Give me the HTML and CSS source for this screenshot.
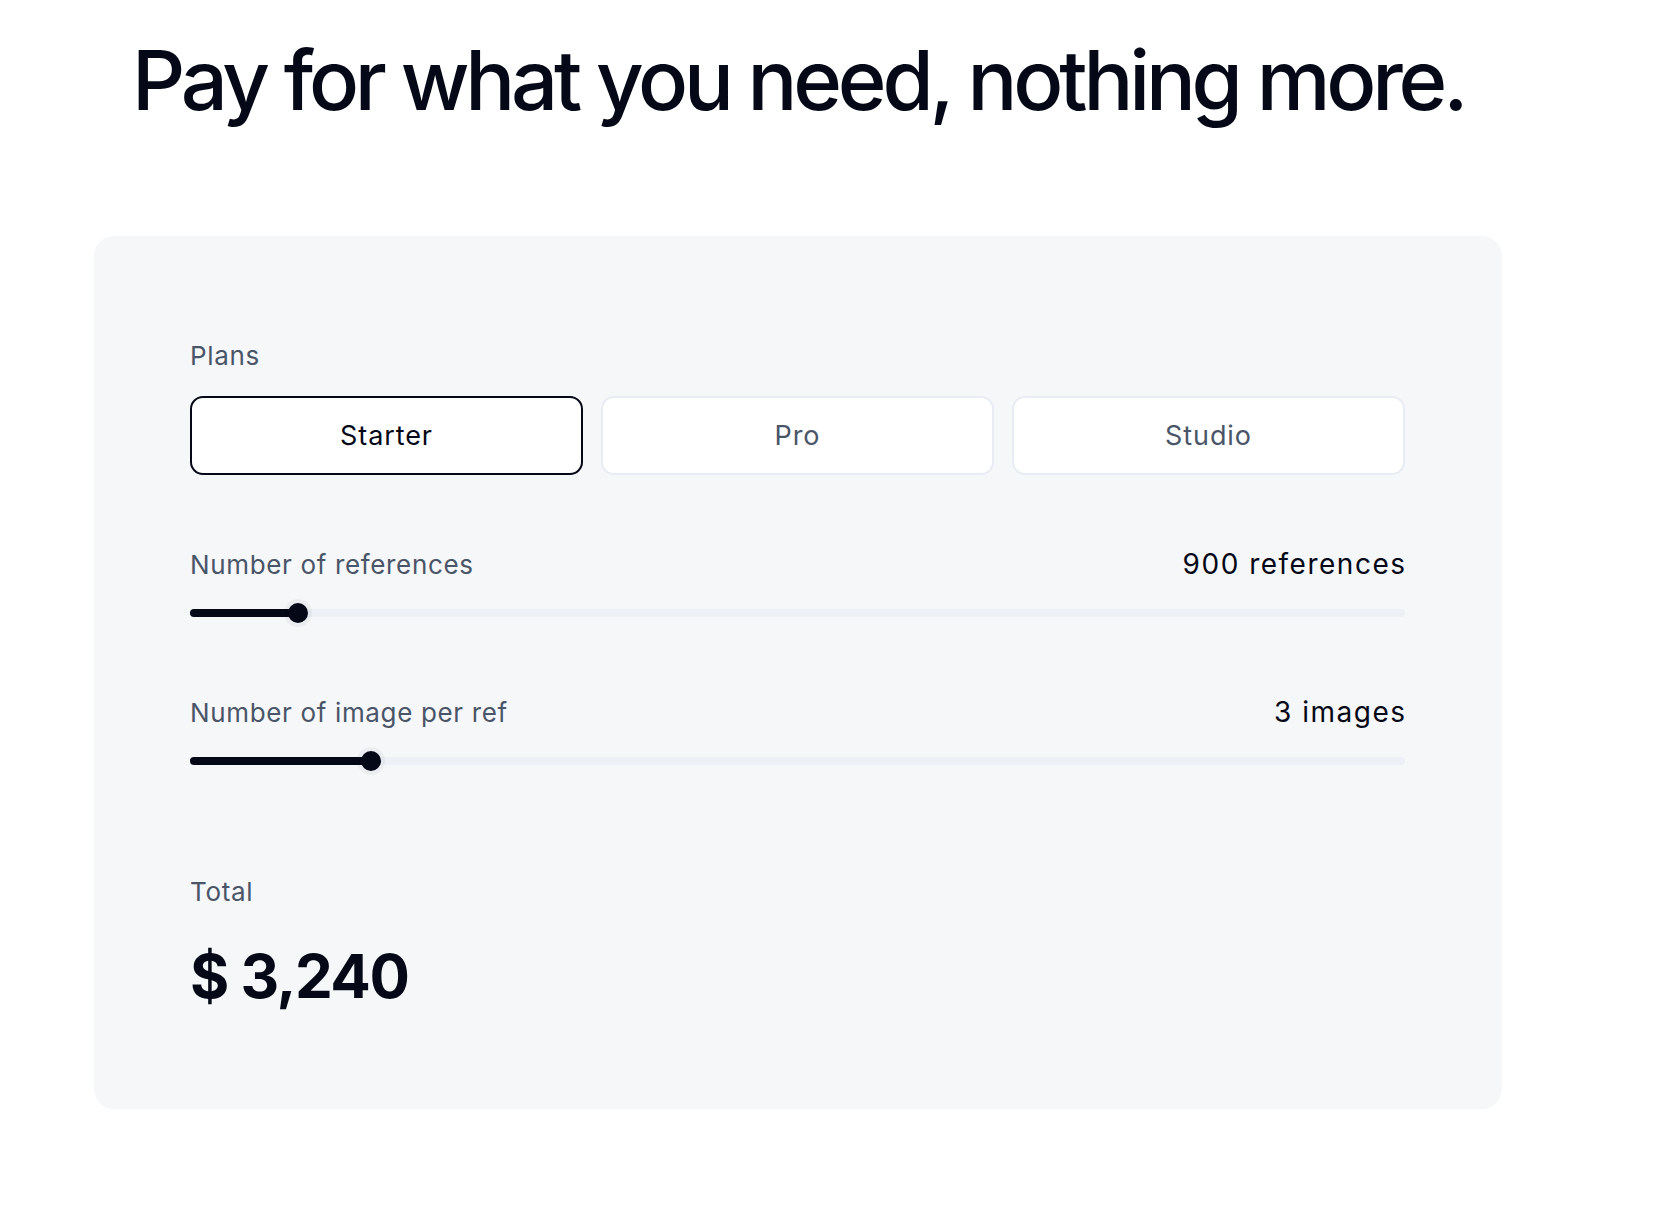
FILE: index.html
```html
<!DOCTYPE html>
<html lang="en">
<head>
<meta charset="utf-8">
<title>Pricing</title>
<link rel="stylesheet" href="styles.css">
</head>
<body>
<main class="page">
  <h1 class="title">Pay for what you need, nothing more.</h1>
  <section class="card">
    <div class="field">
      <div class="label">Plans</div>
      <div class="plans">
        <button class="plan plan--active">Starter</button>
        <button class="plan">Pro</button>
        <button class="plan">Studio</button>
      </div>
    </div>
    <div class="field field--slider">
      <div class="row">
        <span class="label">Number of references</span>
        <span class="value">900 references</span>
      </div>
      <div class="slider">
        <div class="fill" style="width: 107.6px"></div>
        <div class="thumb" style="left: 107.6px"></div>
      </div>
    </div>
    <div class="field field--slider">
      <div class="row">
        <span class="label">Number of image per ref</span>
        <span class="value">3 images</span>
      </div>
      <div class="slider">
        <div class="fill" style="width: 181px"></div>
        <div class="thumb" style="left: 181px"></div>
      </div>
    </div>
    <div class="total">
      <div class="label">Total</div>
      <div class="price">$ 3,240</div>
    </div>
  </section>
</main>
</body>
</html>
```

FILE: styles.css
```css
* { box-sizing: border-box; }
html, body { margin: 0; padding: 0; background: #ffffff; }
body {
  font-family: Inter, "Noto Sans", "Liberation Sans", sans-serif;
  color: #050816;
}
.page {
  padding: 39px 0 0 94px;
}
.title {
  margin: 0 0 0 38px;
  font-size: 83px;
  line-height: 83px;
  font-weight: 500;
  letter-spacing: -0.0505em;
  color: #050816;
  white-space: nowrap;
}
.card {
  margin-top: 114px;
  width: 1408px;
  background: #f6f7f9;
  border-radius: 20px;
  padding: 104px 97px 97px 96px;
}
.label {
  font-size: 26px;
  line-height: 32px;
  letter-spacing: 0.65px;
  color: #4a5568;
}
.plans {
  margin-top: 24px;
  display: grid;
  grid-template-columns: repeat(3, 1fr);
  gap: 18px;
}
.plan {
  height: 79px;
  background: #ffffff;
  border: 2px solid #e8ecf3;
  border-radius: 13px;
  font-family: inherit;
  font-size: 27px;
  letter-spacing: 0.9px;
  color: #4a5568;
  padding: 0;
  cursor: pointer;
}
.plan--active {
  border-color: #050816;
  color: #050816;
}
.field--slider { margin-top: 73px; }
.row {
  display: flex;
  justify-content: space-between;
  align-items: baseline;
}
.value {
  font-size: 28px;
  line-height: 32px;
  letter-spacing: 1.5px;
  color: #050816;
  font-weight: 400;
  margin-right: -1.5px;
}
.slider {
  position: relative;
  margin-top: 22px;
  height: 20px;
  display: flex;
  align-items: center;
}
.slider::before {
  content: "";
  display: block;
  width: 100%;
  height: 8px;
  border-radius: 4px;
  background: #edf0f5;
}
.fill {
  position: absolute;
  left: 0;
  top: 6px;
  height: 8px;
  border-radius: 4px;
  background: #050816;
}
.thumb {
  position: absolute;
  top: 0;
  width: 20px;
  height: 20px;
  margin-left: -10px;
  border-radius: 50%;
  background: #050816;
  box-shadow: 0 0 0 4px rgba(5, 8, 22, 0.04);
}
.total { margin-top: 105px; }
.price {
  margin-top: 32px;
  font-size: 60px;
  line-height: 72px;
  font-weight: 700;
  letter-spacing: -1.5px;
  color: #050816;
}
```
